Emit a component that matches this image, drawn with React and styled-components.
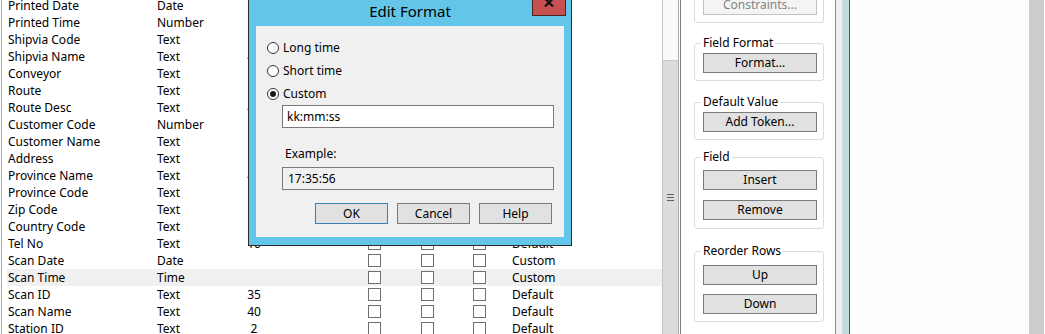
import React from "react";
import styled, { createGlobalStyle } from "styled-components";

const GlobalStyle = createGlobalStyle`
  html, body {
    margin: 0;
    padding: 0;
    background: #ffffff;
    overflow: hidden;
  }
  body {
    font-family: "Noto Sans", "Open Sans", sans-serif;
    font-size: 12px;
    color: #000000;
  }
`;

const fields = [
  { name: "Printed Date", type: "Date", len: "", format: "Custom" },
  { name: "Printed Time", type: "Number", len: "", format: "Default" },
  { name: "Shipvia Code", type: "Text", len: "10", format: "Default" },
  { name: "Shipvia Name", type: "Text", len: "40", format: "Default" },
  { name: "Conveyor", type: "Text", len: "10", format: "Default" },
  { name: "Route", type: "Text", len: "10", format: "Default" },
  { name: "Route Desc", type: "Text", len: "40", format: "Default" },
  { name: "Customer Code", type: "Number", len: "", format: "Default" },
  { name: "Customer Name", type: "Text", len: "100", format: "Default" },
  { name: "Address", type: "Text", len: "100", format: "Default" },
  { name: "Province Name", type: "Text", len: "40", format: "Default" },
  { name: "Province Code", type: "Text", len: "10", format: "Default" },
  { name: "Zip Code", type: "Text", len: "10", format: "Default" },
  { name: "Country Code", type: "Text", len: "10", format: "Default" },
  { name: "Tel No", type: "Text", len: "10", format: "Default" },
  { name: "Scan Date", type: "Date", len: "", format: "Custom" },
  { name: "Scan Time", type: "Time", len: "", format: "Custom", selected: true },
  { name: "Scan ID", type: "Text", len: "35", format: "Default" },
  { name: "Scan Name", type: "Text", len: "40", format: "Default" },
  { name: "Station ID", type: "Text", len: "2", format: "Default" },
];

const Screen = styled.div`
  position: relative;
  display: flex;
  width: 1045px;
  height: 334px;
  overflow: hidden;
  background: #ffffff;
`;

const GridArea = styled.div`
  width: 660px;
  margin-left: 1px;
  border-left: 1px solid #a8a8a8;
  overflow: hidden;
`;

const Rows = styled.div`
  margin-top: -3px;
  padding-left: 5px;
`;

const Row = styled.div`
  display: grid;
  grid-template-columns: 150px 80px 34px 77px 53px 52px 53px 1fr;
  align-items: center;
  height: 17px;
  line-height: 17px;
  background: ${(p) => (p.$selected ? "#f0f0f0" : "transparent")};
`;

const Cell = styled.div`
  white-space: nowrap;
  padding-left: ${(p) => p.$pad || 0}px;
  text-align: ${(p) => (p.$center ? "center" : "left")};
`;

const LengthCell = styled(Cell)`
  text-align: center;
  padding-left: ${(p) => (p.$wide ? 6 : 0)}px;
`;

const CheckCell = styled.div`
  display: flex;
  justify-content: center;
  margin-top: -1px;
`;

const Check = styled.span`
  width: 13px;
  height: 13px;
  box-sizing: border-box;
  border: 1px solid #707070;
  background: #ffffff;
`;

const ScrollBar = styled.div`
  width: 17px;
  box-sizing: border-box;
  border-left: 1px solid #c4c4c4;
  border-right: 1px solid #ababab;
  background: #f9f9f9;
  display: flex;
  flex-direction: column;
`;

const Thumb = styled.div`
  margin-top: 60px;
  flex: 1;
  background: #dcdcdc;
  border-top: 1px solid #c8c8c8;
  display: flex;
  align-items: center;
  justify-content: center;
`;

const Grip = styled.div`
  width: 7px;
  height: 7px;
  background: linear-gradient(
    #606060 0 1px,
    transparent 1px 3px,
    #606060 3px 4px,
    transparent 4px 6px,
    #606060 6px 7px
  );
`;

const SidePanel = styled.div`
  width: 156px;
  margin-left: 1px;
  box-sizing: border-box;
  border-left: 1px solid #7f7f7f;
  border-right: 1px solid #8a8a8a;
  padding: 0 11px 0 13px;
  background: #ffffff;
  overflow: hidden;
`;

const Stack = styled.div`
  display: flex;
  flex-direction: column;
  margin-top: -23px;
`;

const Group = styled.fieldset`
  margin: ${(p) => p.$gap || 0}px 0 0 0;
  padding: ${(p) => p.$top || 2}px 6px ${(p) => p.$bottom || 7}px 8px;
  border: 1px solid #d5dde4;
  border-radius: 3px;
  display: flex;
  flex-direction: column;
  gap: ${(p) => p.$inner || 10}px;
  min-width: 0;
`;

const Legend = styled.legend`
  padding: 0 2px;
  margin-left: -2px;
  line-height: 16px;
  font-size: 12px;
`;

const PanelButton = styled.button`
  width: 114px;
  height: 20px;
  box-sizing: border-box;
  border: 1px solid ${(p) => (p.disabled ? "#c2c2c2" : "#7a7a7a")};
  background: ${(p) => (p.disabled ? "#f4f4f4" : "#e1e1e1")};
  color: ${(p) => (p.disabled ? "#838383" : "#000000")};
  font-family: inherit;
  font-size: 12px;
  padding: 0;
  line-height: 18px;
`;

const FrameStrip = styled.div`
  width: 6px;
  background: #f0f0f0;
`;

const BlueStrip = styled.div`
  width: 7px;
  background: #c5d9df;
  border-right: 1px solid #555555;
`;

const Canvas = styled.div`
  flex: 1;
  background: #fdfdfd;
`;

const OuterScroll = styled.div`
  width: 15px;
  background: #cccccc;
  border-right: 1px solid #ffffff;
`;

/* dialog overlay */
const Dialog = styled.div`
  position: absolute;
  left: 248px;
  top: -5px;
  width: 324px;
  height: 251px;
  box-sizing: border-box;
  border: 1px solid #2c2c2c;
  background: #63c6e9;
  padding: 0 7px 8px 7px;
  display: flex;
  flex-direction: column;
`;

const TitleBar = styled.div`
  position: relative;
  height: 30px;
  margin: 0 -7px;
  text-align: center;
  line-height: 30px;
  font-size: 15px;
  color: #000000;
`;

const CloseButton = styled.div`
  position: absolute;
  right: 5px;
  top: -1px;
  width: 34px;
  height: 21px;
  box-sizing: border-box;
  background: #c75050;
  border: 1px solid #4a2222;
  border-top: none;
  display: flex;
  align-items: center;
  justify-content: center;
  padding-bottom: 5px;
`;

const Client = styled.div`
  flex: 1;
  background: #f0f0f0;
  padding: 10px 10px 0 11px;
  display: flex;
  flex-direction: column;
`;

const RadioRow = styled.label`
  display: flex;
  align-items: center;
  gap: 4px;
  height: 23px;
`;

const Radio = styled.span`
  position: relative;
  width: 12px;
  height: 12px;
  box-sizing: border-box;
  border-radius: 50%;
  border: 1px solid #333333;
  background: #ffffff;

  &::after {
    content: "";
    position: absolute;
    left: 2px;
    top: 2px;
    width: 6px;
    height: 6px;
    border-radius: 50%;
    background: ${(p) => (p.$checked ? "#1a1a1a" : "transparent")};
  }
`;

const TextBox = styled.div`
  margin-left: 15px;
  height: 23px;
  box-sizing: border-box;
  border: 1px solid #7a7a7a;
  background: ${(p) => (p.$readOnly ? "#f0f0f0" : "#ffffff")};
  padding-left: ${(p) => (p.$readOnly ? 5 : 4)}px;
  line-height: 21px;
`;

const FieldLabel = styled.div`
  margin: 18px 0 5px 18px;
  line-height: 16px;
`;

const ButtonRow = styled.div`
  display: flex;
  justify-content: flex-end;
  gap: 9px;
  margin: 13px 2px 0 0;
`;

const DialogButton = styled.button`
  width: 73px;
  height: 21px;
  box-sizing: border-box;
  border: 1px solid ${(p) => (p.$default ? "#3c7fb1" : "#7a7a7a")};
  background: #e1e1e1;
  font-family: inherit;
  font-size: 12px;
  color: #000000;
  padding: 0;
`;

function CloseIcon() {
  return (
    <svg width="12" height="9" viewBox="0 0 12 9">
      <path d="M2 0.5 L10 8.5 M10 0.5 L2 8.5" stroke="#111" strokeWidth="2.2" fill="none" />
    </svg>
  );
}

export default function App() {
  return (
    <>
      <GlobalStyle />
      <Screen>
        <GridArea>
          <Rows>
            {fields.map((f) => (
              <Row key={f.name} $selected={f.selected}>
                <Cell $pad={1}>{f.name}</Cell>
                <Cell>{f.type}</Cell>
                <LengthCell $wide={f.len.length > 2}>{f.len}</LengthCell>
                <Cell />
                <CheckCell><Check /></CheckCell>
                <CheckCell><Check /></CheckCell>
                <CheckCell><Check /></CheckCell>
                <Cell $pad={6}>{f.format}</Cell>
              </Row>
            ))}
          </Rows>
        </GridArea>
        <ScrollBar>
          <Thumb>
            <Grip />
          </Thumb>
        </ScrollBar>
        <SidePanel>
          <Stack>
            <Group>
              <Legend>Validation</Legend>
              <PanelButton disabled>Constraints...</PanelButton>
            </Group>
            <Group $gap={12}>
              <Legend>Field Format</Legend>
              <PanelButton>Format...</PanelButton>
            </Group>
            <Group $gap={13}>
              <Legend>Default Value</Legend>
              <PanelButton>Add Token...</PanelButton>
            </Group>
            <Group $gap={9} $top={5} $bottom={8}>
              <Legend>Field</Legend>
              <PanelButton>Insert</PanelButton>
              <PanelButton>Remove</PanelButton>
            </Group>
            <Group $gap={14} $top={6} $inner={9}>
              <Legend>Reorder Rows</Legend>
              <PanelButton>Up</PanelButton>
              <PanelButton>Down</PanelButton>
            </Group>
          </Stack>
        </SidePanel>
        <FrameStrip />
        <BlueStrip />
        <Canvas />
        <OuterScroll />

        <Dialog>
          <TitleBar>
            Edit Format
            <CloseButton>
              <CloseIcon />
            </CloseButton>
          </TitleBar>
          <Client>
            <RadioRow>
              <Radio />
              Long time
            </RadioRow>
            <RadioRow>
              <Radio />
              Short time
            </RadioRow>
            <RadioRow>
              <Radio $checked />
              Custom
            </RadioRow>
            <TextBox>kk:mm:ss</TextBox>
            <FieldLabel>Example:</FieldLabel>
            <TextBox $readOnly>17:35:56</TextBox>
            <ButtonRow>
              <DialogButton $default>OK</DialogButton>
              <DialogButton>Cancel</DialogButton>
              <DialogButton>Help</DialogButton>
            </ButtonRow>
          </Client>
        </Dialog>
      </Screen>
    </>
  );
}
